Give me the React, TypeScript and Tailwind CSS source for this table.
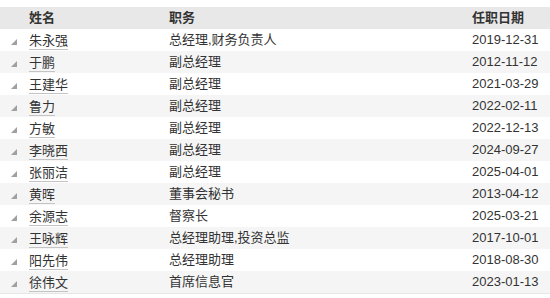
import React from "react";

const rows: [string, string, string][] = [
  ["朱永强", "总经理,财务负责人", "2019-12-31"],
  ["于鹏", "副总经理", "2012-11-12"],
  ["王建华", "副总经理", "2021-03-29"],
  ["鲁力", "副总经理", "2022-02-11"],
  ["方敏", "副总经理", "2022-12-13"],
  ["李晓西", "副总经理", "2024-09-27"],
  ["张丽洁", "副总经理", "2025-04-01"],
  ["黄晖", "董事会秘书", "2013-04-12"],
  ["余源志", "督察长", "2025-03-21"],
  ["王咏辉", "总经理助理,投资总监", "2017-10-01"],
  ["阳先伟", "总经理助理", "2018-08-30"],
  ["徐伟文", "首席信息官", "2023-01-13"],
];

export default function App() {
  return (
    <div
      className="w-[550px] h-[298px] bg-white pt-[7px] text-[13px] text-[#333]"
      style={{ fontFamily: '"Liberation Sans", "Noto Sans CJK SC", sans-serif' }}
    >
      <div className="grid grid-cols-[29px_140px_303px_1fr] h-[22px] items-center bg-[#e8e8e8] font-bold">
        <div />
        <div>姓名</div>
        <div>职务</div>
        <div>任职日期</div>
      </div>
      {rows.map(([name, role, date], i) => (
        <div
          key={name}
          className={`grid grid-cols-[29px_140px_303px_1fr] h-[22px] items-center ${
            i % 2 === 1 ? "bg-[#f5f5f5]" : "bg-white"
          }`}
        >
          <div className="relative h-full">
            <svg
              className="absolute left-[11px] top-[10px]"
              width="6"
              height="6"
              viewBox="0 0 6 6"
            >
              <polygon points="6,0 6,6 0,6" fill="#a0a0a0" />
            </svg>
          </div>
          <div className="h-full flex items-end">
            <span className="inline-block leading-[17px] border-b border-[#c4c4c4] mb-px">
              {name}
            </span>
          </div>
          <div>{role}</div>
          <div>{date}</div>
        </div>
      ))}
      <div className="h-px bg-[#e6e6e6]" />
    </div>
  );
}
